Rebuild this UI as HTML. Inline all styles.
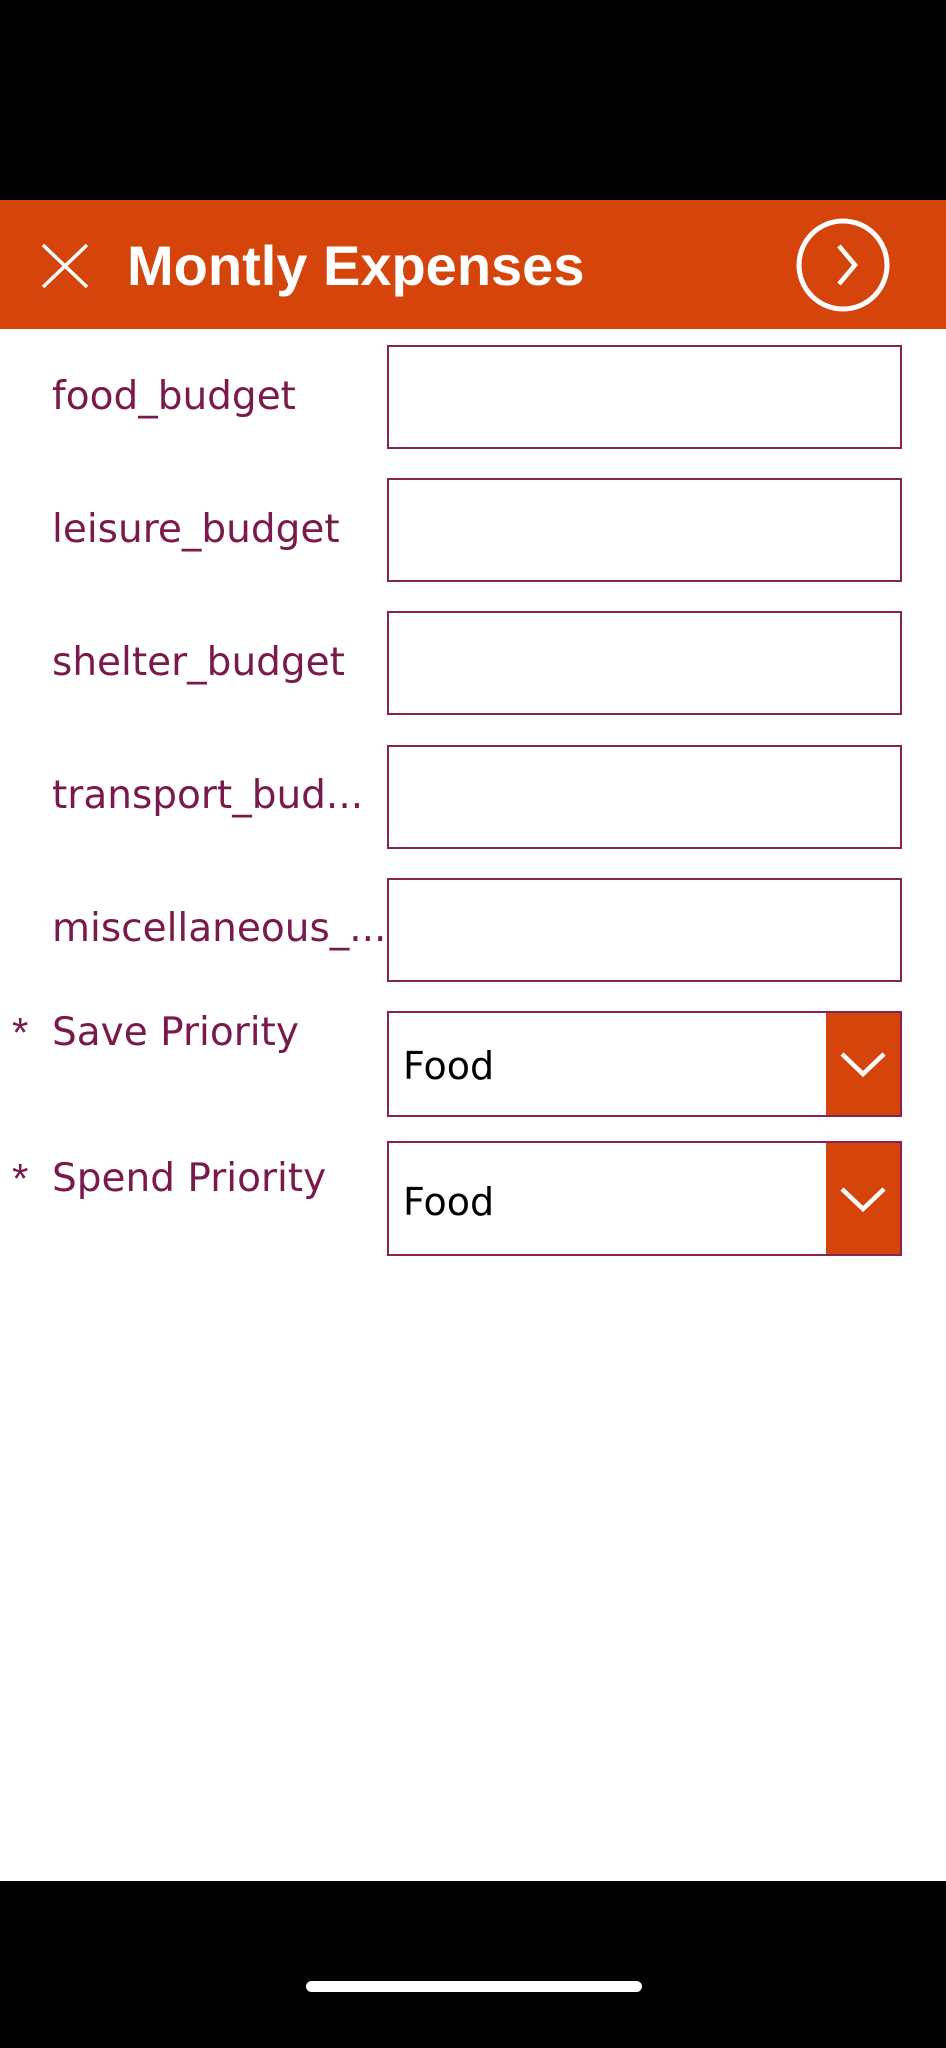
<!DOCTYPE html>
<html><head><meta charset="utf-8"><style>
*{margin:0;padding:0;box-sizing:border-box}
body{width:946px;height:2048px;background:#fff;position:relative;overflow:hidden;font-family:"Liberation Sans","DejaVu Sans",sans-serif}
.blk{position:absolute;left:0;width:946px;background:#000}
.hdr{position:absolute;left:0;top:200px;width:946px;height:129px;background:#D4440B}
.title{position:absolute;left:127px;top:234px;font-size:56px;font-weight:bold;color:#fff;line-height:64px}
.lbl{position:absolute;left:52px;font-family:"DejaVu Sans",sans-serif;font-size:39px;color:#7A1A4C;line-height:50px;white-space:nowrap}
.star{position:absolute;left:12px;font-size:42px;color:#7A1A4C;line-height:50px}
.box{position:absolute;left:387px;width:515px;border:2px solid #8A2352;background:#fff}
.dd .v{position:absolute;left:14px;font-family:"DejaVu Sans",sans-serif;font-size:38px;color:#000;line-height:50px}
.dd .btn{position:absolute;right:0;top:0;bottom:0;width:74px;background:#D4440B}
</style></head><body>
<div class="blk" style="top:0;height:200px"></div>
<div class="hdr"></div>
<svg style="position:absolute;left:40px;top:242px" width="50" height="48"><path d="M3 3L47 45M47 3L3 45" stroke="#fff" stroke-width="3.5" fill="none"/></svg>
<div class="title">Montly Expenses</div>
<svg style="position:absolute;left:795px;top:217px" width="96" height="96"><circle cx="48" cy="48" r="44" stroke="#fff" stroke-width="5" fill="none"/><path d="M44 29L60 48L44 67" stroke="#fff" stroke-width="4.5" fill="none"/></svg>

<div class="lbl" style="top:372px">food_budget</div>
<div class="box" style="top:345px;height:104px"></div>
<div class="lbl" style="top:505px">leisure_budget</div>
<div class="box" style="top:478px;height:104px"></div>
<div class="lbl" style="top:638px">shelter_budget</div>
<div class="box" style="top:611px;height:104px"></div>
<div class="lbl" style="top:771px">transport_bud...</div>
<div class="box" style="top:745px;height:104px"></div>
<div class="lbl" style="top:904px">miscellaneous_...</div>
<div class="box" style="top:878px;height:104px"></div>

<div class="star" style="top:1008px">*</div>
<div class="lbl" style="top:1008px">Save Priority</div>
<div class="box dd" style="top:1011px;height:106px"><div class="v" style="top:28px">Food</div><div class="btn"><svg width="74" height="102" style="position:absolute;left:0;top:0"><path d="M16 41L37 61L58 41" stroke="#fff" stroke-width="4.5" fill="none"/></svg></div></div>
<div class="star" style="top:1154px">*</div>
<div class="lbl" style="top:1154px">Spend Priority</div>
<div class="box dd" style="top:1141px;height:115px"><div class="v" style="top:34px">Food</div><div class="btn"><svg width="74" height="111" style="position:absolute;left:0;top:0"><path d="M16 46L37 66L58 46" stroke="#fff" stroke-width="4.5" fill="none"/></svg></div></div>

<div class="blk" style="top:1881px;height:167px"></div>
<div style="position:absolute;left:306px;top:1981px;width:336px;height:11px;border-radius:6px;background:#fff"></div>
</body></html>
